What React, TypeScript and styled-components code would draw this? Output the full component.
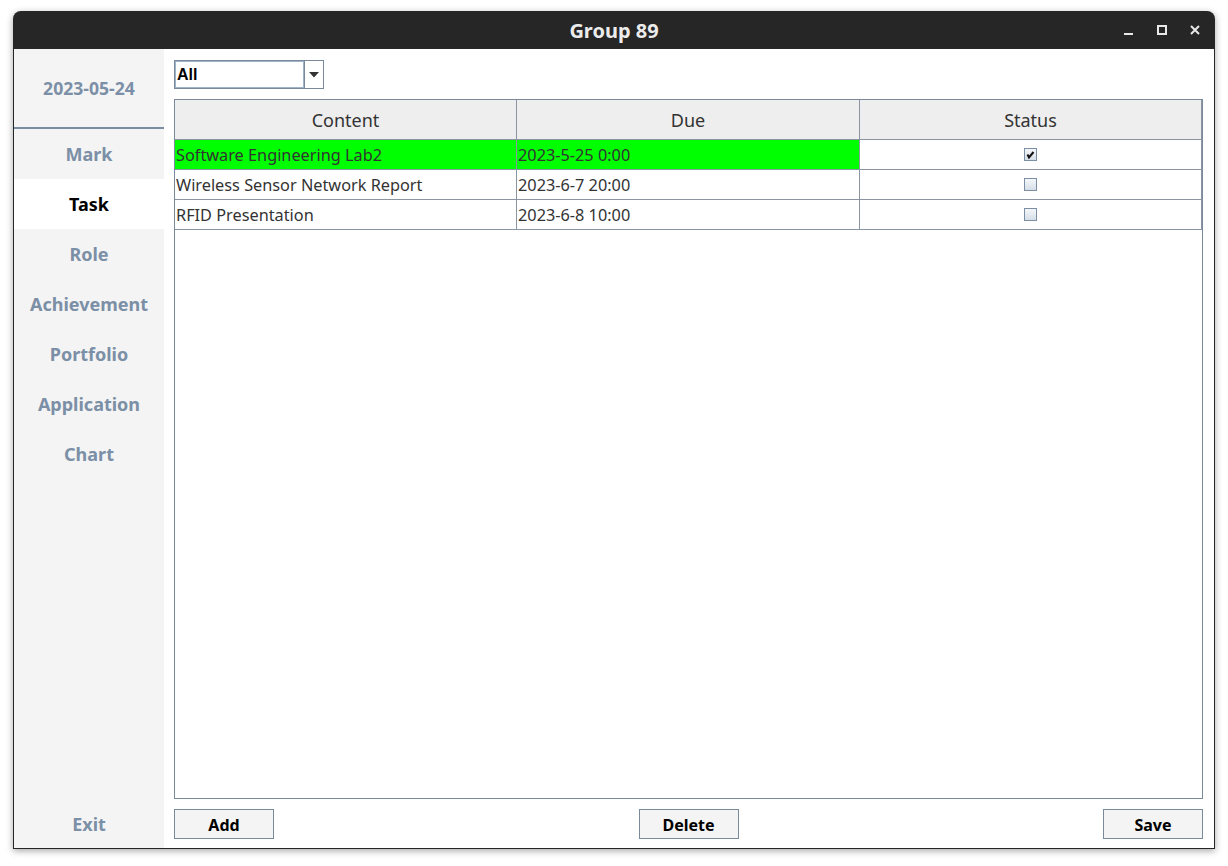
import React from "react";
import styled, { createGlobalStyle } from "styled-components";

const Global = createGlobalStyle`
  html, body { margin: 0; padding: 0; background: #ffffff; }
  body { font-family: "Noto Sans", "Open Sans", sans-serif; }
  * { box-sizing: border-box; }
`;

const Page = styled.div`
  padding: 11px 0 0 13px;
  width: 1228px;
  height: 866px;
`;

const Window = styled.div`
  width: 1202px;
  height: 838px;
  display: flex;
  flex-direction: column;
  border-radius: 8px 8px 0 0;
  background: #262626;
  box-shadow: 0 2px 7px rgba(0, 0, 0, 0.35);
  overflow: hidden;
`;

const TitleBar = styled.div`
  height: 38px;
  flex: none;
  display: flex;
  align-items: center;
  justify-content: center;
  position: relative;
  color: #ececec;
  font-weight: 700;
  font-size: 20px;
`;

const Controls = styled.div`
  position: absolute;
  right: 12px;
  top: 0;
  height: 100%;
  display: flex;
  align-items: center;
  gap: 17px;
`;

const Ctl = styled.span`
  width: 16px;
  height: 16px;
  display: flex;
  align-items: center;
  justify-content: center;
`;

const Body = styled.div`
  flex: 1;
  display: flex;
  margin: 0 1px 1px 1px;
  background: #ffffff;
  min-height: 0;
`;

const Sidebar = styled.div`
  width: 150px;
  flex: none;
  background: #f4f4f4;
  display: flex;
  flex-direction: column;
`;

const DateBox = styled.div`
  height: 80px;
  display: flex;
  align-items: center;
  justify-content: center;
  color: #7b8fa6;
  font-weight: 700;
  font-size: 17.6px;
  border-bottom: 2px solid #7b8da3;
`;

const NavItem = styled.div<{ $active?: boolean; $bottom?: boolean }>`
  height: 50px;
  display: flex;
  align-items: center;
  justify-content: center;
  font-weight: 700;
  font-size: 18px;
  padding-top: ${(p) => (p.$bottom ? "2px" : "0")};
  color: ${(p) => (p.$active ? "#000000" : "#7b8fa6")};
  background: ${(p) => (p.$active ? "#ffffff" : "transparent")};
`;

const Spacer = styled.div`
  flex: 1;
`;

const Main = styled.div`
  flex: 1;
  display: flex;
  flex-direction: column;
  padding: 11px 11px 10px 10px;
  gap: 10px;
  min-width: 0;
`;

const Combo = styled.div`
  width: 150px;
  height: 29px;
  display: flex;
  border: 1px solid #7b8a9b;
  background: #ffffff;
`;

const ComboText = styled.div`
  flex: 1;
  border: 1px solid #9fb3cb;
  display: flex;
  align-items: center;
  padding-left: 1px;
  font-family: "Liberation Sans", Arial, sans-serif;
  font-weight: 700;
  font-size: 16px;
  color: #000;
`;

const ComboArrow = styled.div`
  width: 19px;
  border-left: 1px solid #7b8a9b;
  display: flex;
  align-items: center;
  justify-content: center;
`;

const TableBox = styled.div`
  flex: 1;
  border: 1px solid #7b8a9b;
  background: #ffffff;
  min-height: 0;
`;

const Grid = styled.div`
  display: grid;
  grid-template-columns: 342px 343px 342px;
`;

const HeadCell = styled.div`
  height: 40px;
  background: #eeeeee;
  display: flex;
  align-items: center;
  justify-content: center;
  padding-top: 1px;
  font-size: 18px;
  color: #333333;
  border-right: 1px solid #8b95a1;
  border-bottom: 1px solid #8b95a1;
`;

const Cell = styled.div<{ $hl?: boolean; $center?: boolean }>`
  height: 30px;
  display: flex;
  align-items: center;
  justify-content: ${(p) => (p.$center ? "center" : "flex-start")};
  padding-left: 1px;
  font-size: 16.3px;
  color: #333333;
  background: ${(p) => (p.$hl ? "#00ff00" : "#ffffff")};
  border-right: 1px solid #8b95a1;
  border-bottom: 1px solid #8b95a1;
  white-space: nowrap;
  overflow: hidden;
`;

const Check = styled.span`
  width: 13px;
  height: 13px;
  border: 1px solid #7c8ea3;
  background: linear-gradient(#f4f7fa, #d6dee8);
  display: flex;
  align-items: center;
  justify-content: center;
  margin-left: -1px;
`;

const Footer = styled.div`
  display: flex;
  justify-content: space-between;
  align-items: center;
  height: 29px;
  flex: none;
`;

const Button = styled.button`
  width: 100px;
  height: 30px;
  border: 1px solid #7b8a9b;
  background: #f4f4f4;
  font-family: "Noto Sans", sans-serif;
  font-weight: 700;
  font-size: 16px;
  color: #000;
  padding: 0;
  padding-top: 3px;
`;

const rows = [
  { c: "Software Engineering Lab2", d: "2023-5-25 0:00", done: true, hl: true },
  { c: "Wireless Sensor Network Report", d: "2023-6-7 20:00", done: false, hl: false },
  { c: "RFID Presentation", d: "2023-6-8 10:00", done: false, hl: false },
];

const nav = ["Mark", "Task", "Role", "Achievement", "Portfolio", "Application", "Chart"];

export default function App() {
  return (
    <>
      <Global />
      <Page>
        <Window>
          <TitleBar>
            Group 89
            <Controls>
              <Ctl>
                <svg width="12" height="12" viewBox="0 0 12 12">
                  <rect x="1" y="9" width="9" height="2" fill="#e8e8e8" />
                </svg>
              </Ctl>
              <Ctl>
                <svg width="12" height="12" viewBox="0 0 12 12">
                  <rect x="2" y="2" width="8" height="8" fill="none" stroke="#e8e8e8" strokeWidth="2" />
                </svg>
              </Ctl>
              <Ctl>
                <svg width="12" height="12" viewBox="0 0 12 12">
                  <path d="M2 2 L10 10 M10 2 L2 10" stroke="#e8e8e8" strokeWidth="2" />
                </svg>
              </Ctl>
            </Controls>
          </TitleBar>
          <Body>
            <Sidebar>
              <DateBox>2023-05-24</DateBox>
              {nav.map((n) => (
                <NavItem key={n} $active={n === "Task"}>
                  {n}
                </NavItem>
              ))}
              <Spacer />
              <NavItem $bottom>Exit</NavItem>
            </Sidebar>
            <Main>
              <Combo>
                <ComboText>All</ComboText>
                <ComboArrow>
                  <svg width="10" height="6" viewBox="0 0 10 6">
                    <path d="M0 0 H10 L5 5.5 Z" fill="#333" />
                  </svg>
                </ComboArrow>
              </Combo>
              <TableBox>
                <Grid>
                  <HeadCell>Content</HeadCell>
                  <HeadCell>Due</HeadCell>
                  <HeadCell>Status</HeadCell>
                  {rows.map((r) => (
                    <React.Fragment key={r.c}>
                      <Cell $hl={r.hl}>{r.c}</Cell>
                      <Cell $hl={r.hl}>{r.d}</Cell>
                      <Cell $center>
                        <Check>
                          {r.done && (
                            <svg width="9" height="9" viewBox="0 0 9 9">
                              <path d="M1.5 4.5 L3 7.5 L7.5 2" fill="none" stroke="#111" strokeWidth="2" />
                            </svg>
                          )}
                        </Check>
                      </Cell>
                    </React.Fragment>
                  ))}
                </Grid>
              </TableBox>
              <Footer>
                <Button>Add</Button>
                <Button>Delete</Button>
                <Button>Save</Button>
              </Footer>
            </Main>
          </Body>
        </Window>
      </Page>
    </>
  );
}
